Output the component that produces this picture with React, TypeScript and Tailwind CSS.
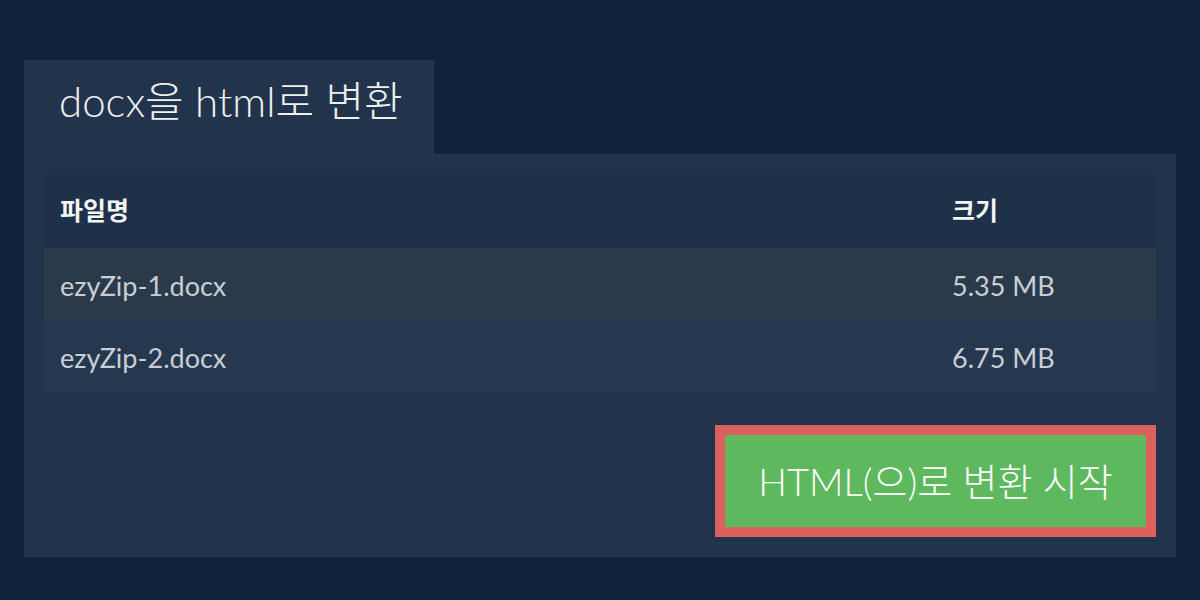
export default function App() {
  const rows = [
    { name: 'ezyZip-1.docx', size: '5.35 MB', bg: 'bg-[#2b3a4b]' },
    { name: 'ezyZip-2.docx', size: '6.75 MB', bg: 'bg-[#253850]' },
  ]

  return (
    <div
      className="h-[600px] w-[1200px] bg-[#10233a] px-6 pt-[60px]"
      style={{ fontFamily: 'Lato, "Noto Sans CJK KR", sans-serif' }}
    >
      {/* Tab */}
      <div className="flex h-[94px] w-[410px] items-start bg-[#21344b] pl-[35px] pt-[13px]">
        <h1 className="text-[42px] font-light leading-[56px] text-[#eef0f3]">docx을 html로 변환</h1>
      </div>

      {/* Panel */}
      <div className="h-[403px] bg-[#21344b] p-5">
        <table className="w-full border-collapse text-left">
          <thead>
            <tr className="h-[74px] bg-[#1f3148]">
              <th className="pl-4 text-[25px] font-bold text-[#f2f4f6]">파일명</th>
              <th className="w-[204px] text-[25px] font-bold text-[#f2f4f6]">크기</th>
            </tr>
          </thead>
          <tbody>
            {rows.map(r => (
              <tr key={r.name} className={`h-[72px] ${r.bg}`}>
                <td className="pl-4 pt-1 text-[27px] text-[#c9ced5]">{r.name}</td>
                <td className="pt-1 text-[27px] text-[#c9ced5]">{r.size}</td>
              </tr>
            ))}
          </tbody>
        </table>

        <div className="mt-[33px] flex justify-end">
          <button className="h-[112px] w-[441px] border-[10px] border-[#dc605e] bg-[#5eb85e] text-[38px] font-light text-white">
            HTML(으)로 변환 시작
          </button>
        </div>
      </div>
    </div>
  )
}
